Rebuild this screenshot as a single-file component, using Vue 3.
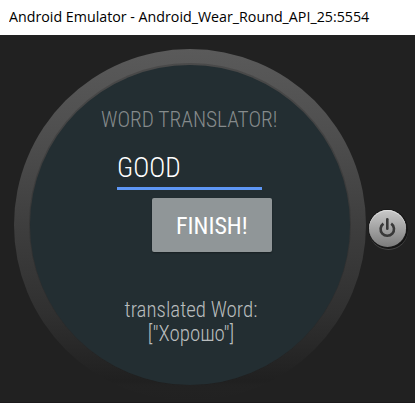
<script setup>
import { ref } from 'vue'

const word = ref('GOOD')
const translation = ref('["Хорошо"]')
</script>

<template>
  <div class="window">
    <header class="titlebar"><span class="title">Android Emulator - Android_Wear_Round_API_25:5554</span></header>
    <main class="stage">
      <section class="bezel">
        <div class="screen">
          <h1 class="heading">WORD TRANSLATOR!</h1>
          <div class="field">{{ word }}</div>
          <button class="finish">FINISH!</button>
          <div class="result">
            <span>translated Word:</span>
            <span>{{ translation }}</span>
          </div>
        </div>
      </section>
      <button class="power" aria-label="Power">
        <svg viewBox="0 0 37 37" width="37" height="37">
          <path d="M14.4 13.6a6.7 6.7 0 1 0 7.8 0" fill="none" stroke="#383838" stroke-width="2.6" />
          <path d="M18.3 9.2v9.6" fill="none" stroke="#383838" stroke-width="2.6" stroke-linecap="round" />
        </svg>
      </button>
    </main>
  </div>
</template>

<style>
body {
  margin: 0;
  background: #212121;
}
</style>

<style scoped>
.window {
  box-sizing: border-box;
  width: 415px;
  height: 403px;
  display: flex;
  flex-direction: column;
  overflow: hidden;
  background: #212121;
  border-bottom: 1px solid #1b191b;
}
.titlebar {
  flex: none;
  height: 35px;
  padding-left: 9px;
  background: #fff;
  color: #000;
  font: 15.2px/33px "Open Sans", "Noto Sans", sans-serif;
  white-space: nowrap;
}
.title {
  display: inline-block;
  transform: scaleX(0.9375);
  transform-origin: 0 50%;
}
.stage {
  flex: 1;
  display: flex;
  align-items: flex-start;
  padding: 14px 0 0 14px;
}
.bezel {
  box-sizing: border-box;
  flex: none;
  width: 352px;
  height: 352px;
  padding: 16px;
  border-radius: 50%;
  background: linear-gradient(#5a5a5a 0%, #4e4e4e 25%, #3d3d3d 52%, #303030 75%, #202020 94%, #222 96%, #212121 100%);
}
.screen {
  display: flex;
  flex-direction: column;
  width: 320px;
  height: 320px;
  border-radius: 50%;
  background: #232e32;
  box-shadow: 0 -1px 0 1px rgba(30, 30, 30, 0.25);
  font-family: "Roboto Condensed", Roboto, sans-serif;
  font-stretch: 75%;
  font-weight: 300;
  white-space: nowrap;
}
.heading {
  margin: 42px 0 0 71px;
  font-size: 21.35px;
  font-weight: 300;
  line-height: 26px;
  color: #868b8c;
}
.field {
  box-sizing: border-box;
  width: 145px;
  height: 45px;
  margin: 12px 0 0 87px;
  border-bottom: 3px solid #5e97f6;
  font-size: 27.2px;
  line-height: 46px;
  color: #fff;
}
.finish {
  width: 120px;
  height: 54px;
  margin: 8px 0 0 122px;
  padding: 2px 0 0 24px;
  border: 0;
  border-radius: 2px;
  background: #909698;
  box-shadow: 0 1px 2px rgba(0, 0, 0, 0.35);
  color: #fff;
  font: inherit;
  font-weight: 400;
  font-size: 24px;
  line-height: 52px;
  text-align: left;
}
.result {
  display: flex;
  flex-direction: column;
  align-items: center;
  width: 140px;
  margin: 46px 0 0 91px;
  font-size: 21.3px;
  line-height: 24px;
  color: #b9bdbe;
  transform: scaleX(0.982);
}
.power {
  flex: none;
  width: 37px;
  height: 37px;
  margin: 161px 0 0 3px;
  padding: 0;
  border: 0;
  border-radius: 50%;
  background: linear-gradient(#c9c9c9, #a2a2a2 50%, #7b7b7b);
  box-shadow: inset 0 1px 0 #dedede, 0 0 0 1px #191919, 1px 1px 0 1px #141414, 1px 2px 0 1px #454545;
}
.power svg {
  display: block;
}
</style>
